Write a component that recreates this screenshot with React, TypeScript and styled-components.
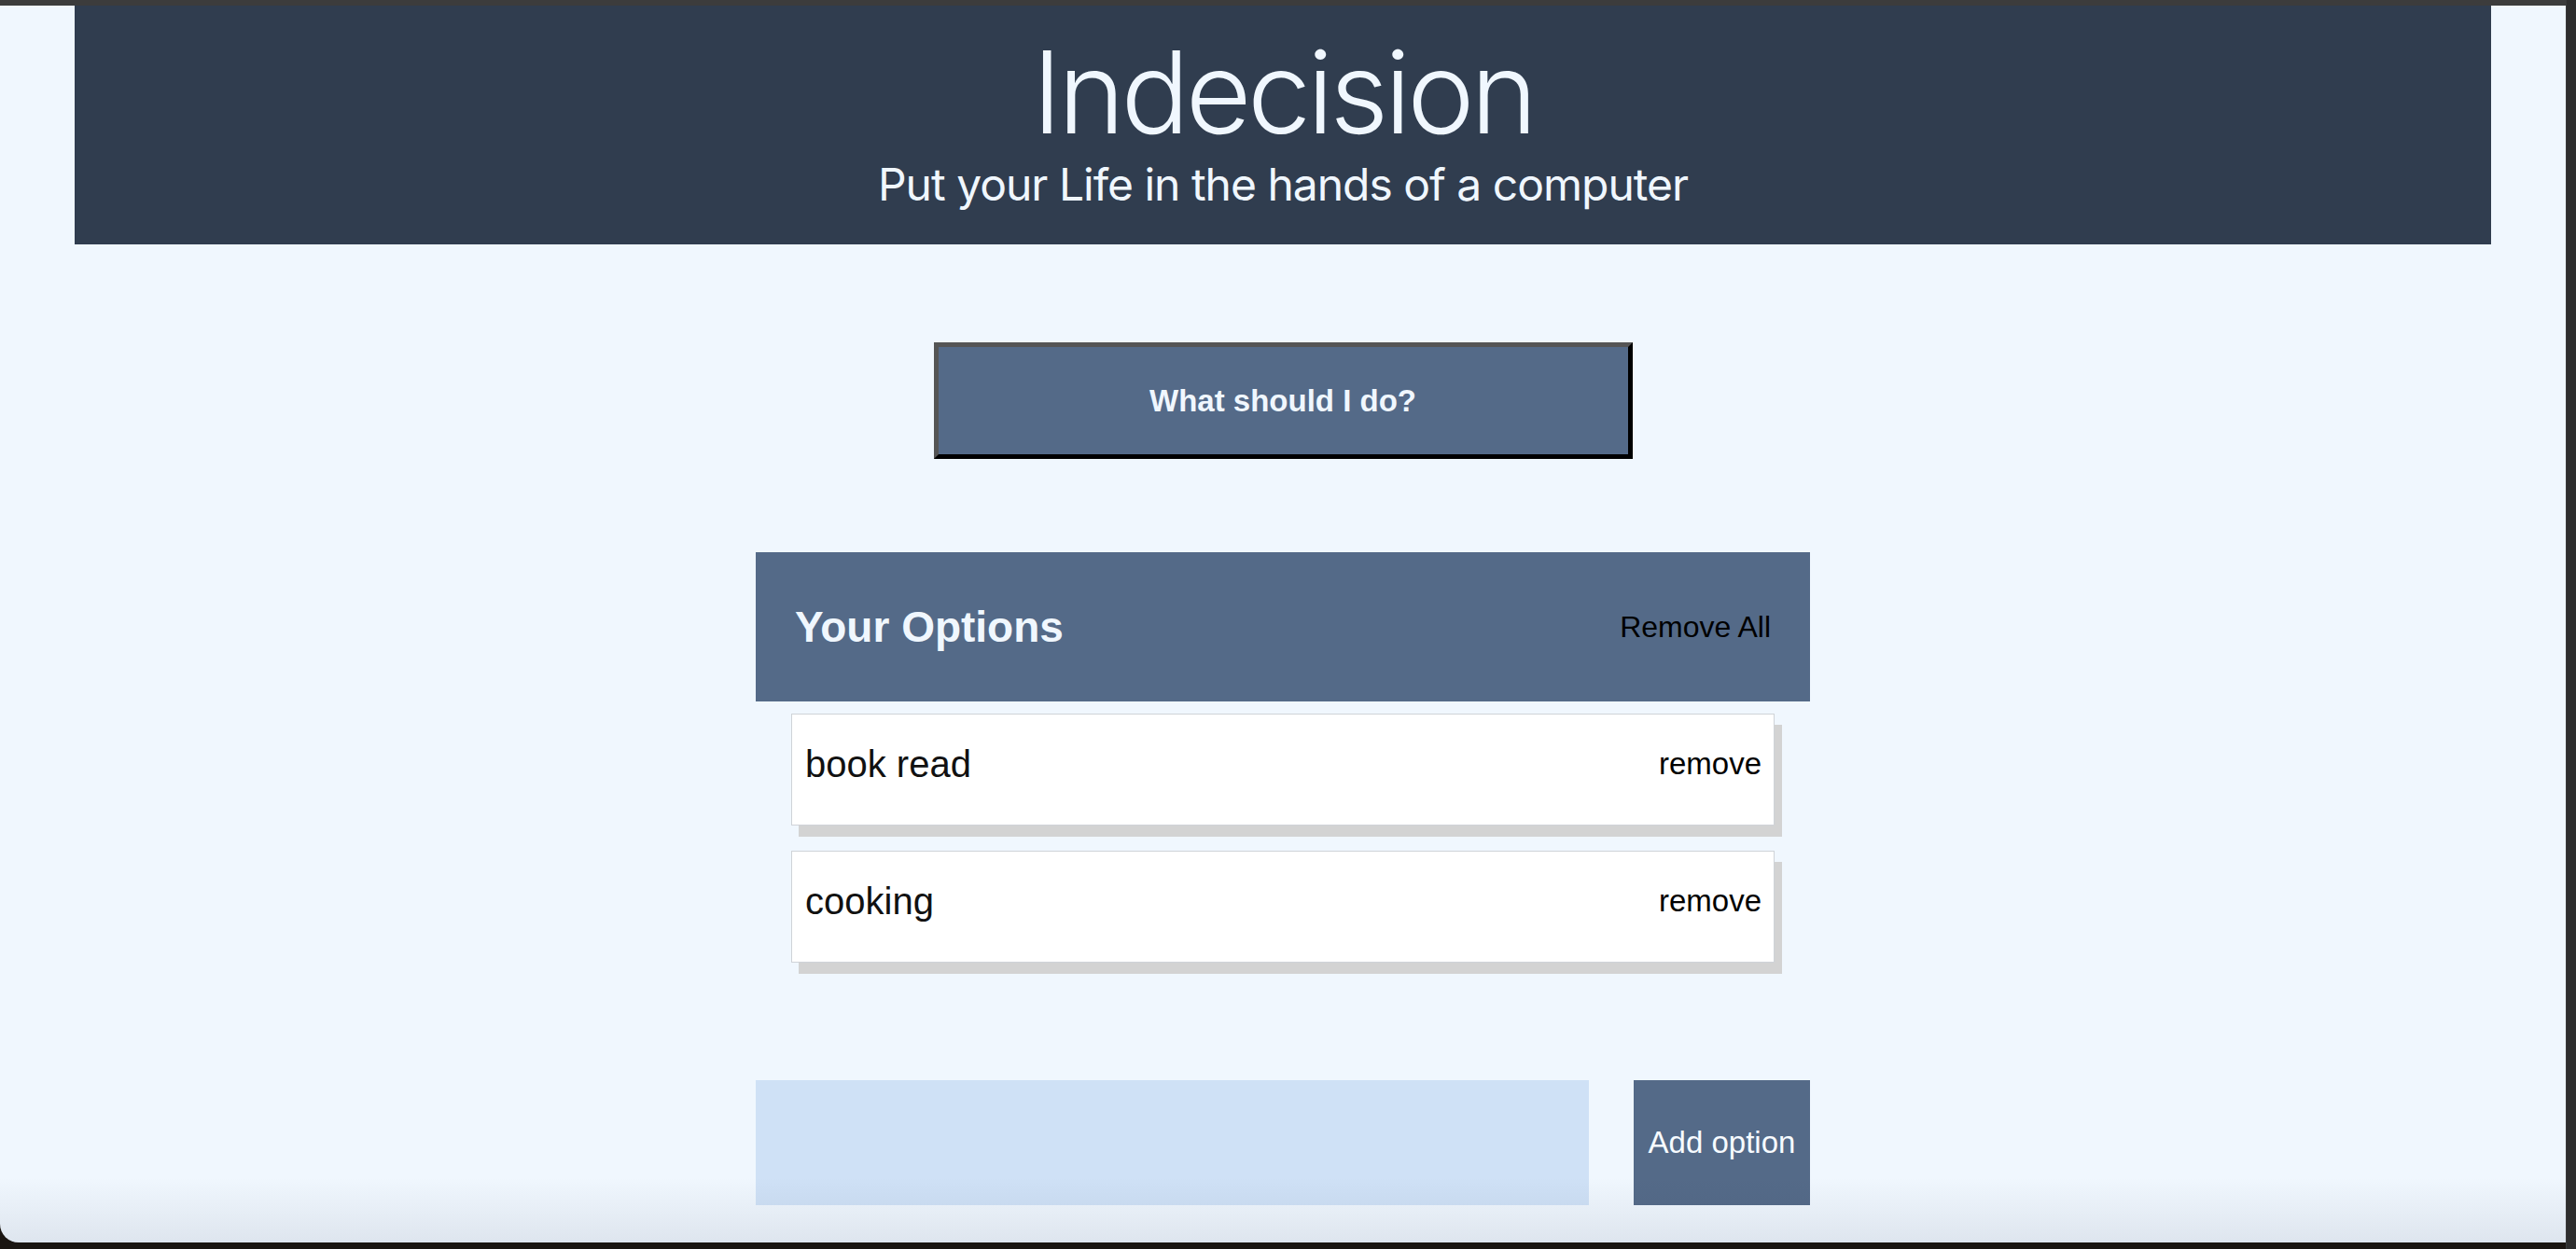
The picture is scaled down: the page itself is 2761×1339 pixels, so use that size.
import { createGlobalStyle, styled } from 'styled-components';

const GlobalStyle = createGlobalStyle`
  html, body {
    margin: 0;
    padding: 0;
    background: #1a1511;
    overflow: hidden;
  }
  * {
    box-sizing: border-box;
  }
`;

const Screen = styled.div`
  display: flex;
  width: 2761px;
  height: 1339px;
  align-items: flex-start;
`;

const Window = styled.div`
  position: relative;
  width: 2750px;
  height: 1332px;
  background: #f0f7fe;
  border-top: 6px solid #3c3c3c;
  border-bottom-left-radius: 20px;
  overflow: hidden;
  display: flex;
  flex-direction: column;
  align-items: center;

  &::after {
    content: '';
    position: absolute;
    left: 0;
    right: 0;
    bottom: 0;
    height: 70px;
    background: linear-gradient(rgba(40, 50, 80, 0), rgba(40, 50, 80, 0.09));
    pointer-events: none;
  }
`;

const Edge = styled.div`
  width: 11px;
  height: 1339px;
  background: #2e2e2e;
  border-left: 1px solid #3a3a3a;
`;

const Header = styled.header`
  align-self: stretch;
  margin: 0 80px;
  height: 256px;
  padding-top: 32px;
  background: #303d4f;
  color: #f0f7fe;
  text-align: center;
  font-family: Inter, 'Liberation Sans', sans-serif;
`;

const Title = styled.h1`
  margin: 0;
  font-size: 122px;
  font-weight: 300;
  line-height: 1;
  letter-spacing: -0.035em;
`;

const Subtitle = styled.h2`
  margin: 14px 0 0;
  font-size: 48px;
  font-weight: 400;
  line-height: 1;
  letter-spacing: -0.021em;
`;

const BigButton = styled.button`
  margin-top: 105px;
  width: 749px;
  height: 125px;
  background: #546a88;
  border-style: solid;
  border-width: 5px;
  border-color: #555555 #000000 #000000 #555555;
  color: #f0f7fe;
  font-family: 'Liberation Sans', Arial, sans-serif;
  font-weight: 700;
  font-size: 33px;
`;

const Options = styled.section`
  width: 1130px;
  margin-top: 100px;
`;

const OptionsHeader = styled.div`
  height: 160px;
  padding: 0 42px;
  background: #546a88;
  display: flex;
  align-items: center;
  justify-content: space-between;
  font-family: 'Liberation Sans', Arial, sans-serif;
`;

const OptionsTitle = styled.h3`
  margin: 0;
  color: #f0f7fe;
  font-size: 46px;
  font-weight: 700;
`;

const TextButton = styled.button<{ $size: number }>`
  padding: 0;
  background: none;
  border: none;
  color: #000;
  font-family: 'Liberation Sans', Arial, sans-serif;
  font-size: ${(p) => p.$size}px;
`;

const OptionList = styled.div`
  display: flex;
  flex-direction: column;
  gap: 27px;
  padding: 13px 38px 0;
`;

const OptionItem = styled.div`
  height: 120px;
  padding: 0 13px 12px 14px;
  background: #fff;
  border: 1px solid #cfd3d8;
  box-shadow: 8px 12px 0 #d3d3d3;
  display: flex;
  align-items: center;
  justify-content: space-between;
  font-family: 'Liberation Sans', Arial, sans-serif;
`;

const OptionText = styled.p`
  margin: 0;
  font-size: 40px;
  color: #111;
`;

const AddForm = styled.form`
  width: 1130px;
  margin-top: 126px;
  display: flex;
  gap: 48px;
`;

const OptionInput = styled.input`
  flex: 1;
  height: 134px;
  background: #cfe1f6;
  border: none;
  outline: none;
`;

const AddButton = styled.button`
  width: 189px;
  height: 134px;
  padding: 0;
  background: #546a88;
  border: none;
  color: #f7fbff;
  font-family: 'Liberation Sans', Arial, sans-serif;
  font-size: 33px;
`;

const options = ['book read', 'cooking'];

const App: React.FC = () => {
  return (
    <Screen>
      <GlobalStyle />
      <Window>
        <Header>
          <Title>Indecision</Title>
          <Subtitle>Put your Life in the hands of a computer</Subtitle>
        </Header>
        <BigButton>What should I do?</BigButton>
        <Options>
          <OptionsHeader>
            <OptionsTitle>Your Options</OptionsTitle>
            <TextButton $size={32}>Remove All</TextButton>
          </OptionsHeader>
          <OptionList>
            {options.map((option) => (
              <OptionItem key={option}>
                <OptionText>{option}</OptionText>
                <TextButton $size={33}>remove</TextButton>
              </OptionItem>
            ))}
          </OptionList>
        </Options>
        <AddForm onSubmit={(e) => e.preventDefault()}>
          <OptionInput type="text" name="option" />
          <AddButton>Add option</AddButton>
        </AddForm>
      </Window>
      <Edge />
    </Screen>
  );
};

export default App;
